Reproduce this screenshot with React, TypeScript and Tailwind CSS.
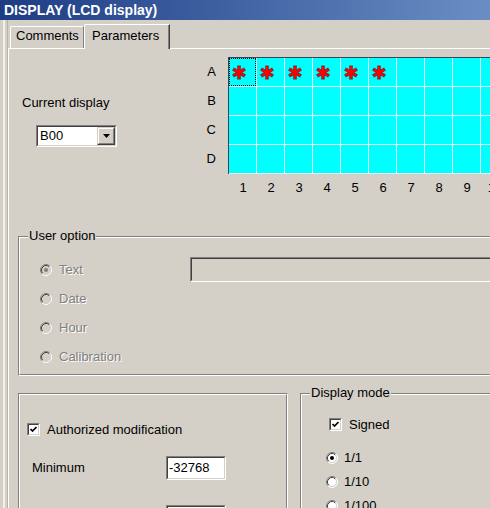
import React from "react"

const cols = Array.from({ length: 11 }, (_, i) => i + 1)
const rows = ["A", "B", "C", "D"]

const Star = () => (
  <svg width="14" height="15" viewBox="0 0 14 15">
    <g stroke="#6a3030" strokeWidth="3.6">
      <line x1="7" y1="0.5" x2="7" y2="14.5" />
      <line x1="1" y1="4" x2="13" y2="11" />
      <line x1="1" y1="11" x2="13" y2="4" />
    </g>
    <g stroke="#ff0000" strokeWidth="2.2">
      <line x1="7" y1="1.3" x2="7" y2="13.7" />
      <line x1="1.7" y1="4.4" x2="12.3" y2="10.6" />
      <line x1="1.7" y1="10.6" x2="12.3" y2="4.4" />
    </g>
  </svg>
)

const Radio = ({
  checked,
  disabled,
}: {
  checked?: boolean
  disabled?: boolean
}) => (
  <svg width="12" height="12" viewBox="0 0 12 12" className="shrink-0">
    <circle cx="6" cy="6" r="5" fill={disabled ? "#d4d0c8" : "#ffffff"} />
    <path d="M2.11 9.89 A5.5 5.5 0 0 1 9.89 2.11" stroke="#808080" fill="none" />
    <path d="M9.89 2.11 A5.5 5.5 0 0 1 2.11 9.89" stroke="#ffffff" fill="none" />
    <path d="M2.82 9.18 A4.5 4.5 0 0 1 9.18 2.82" stroke="#404040" fill="none" />
    <path d="M9.18 2.82 A4.5 4.5 0 0 1 2.82 9.18" stroke="#d4d0c8" fill="none" />
    {checked && (
      <circle cx="6" cy="6" r="2" fill={disabled ? "#808080" : "#000000"} />
    )}
  </svg>
)

const Check = () => (
  <div className="w-[13px] h-[13px] shrink-0 border border-t-[#808080] border-l-[#808080] border-r-white border-b-white">
    <div className="w-full h-full border border-t-[#404040] border-l-[#404040] border-r-[#d4d0c8] border-b-[#d4d0c8] bg-white">
      <svg width="9" height="9" viewBox="0 0 9 9">
        <polyline
          points="1.5,4 3.5,6 7.5,2"
          fill="none"
          stroke="#000"
          strokeWidth="1.7"
        />
      </svg>
    </div>
  </div>
)

const Sunken = ({
  className,
  inner,
  children,
}: {
  className?: string
  inner?: string
  children?: React.ReactNode
}) => (
  <div
    className={
      "border border-t-[#808080] border-l-[#808080] border-r-white border-b-white " +
      (className || "")
    }
  >
    <div
      className={
        "w-full h-full border border-t-[#404040] border-l-[#404040] border-r-[#d4d0c8] border-b-[#d4d0c8] " +
        (inner || "")
      }
    >
      {children}
    </div>
  </div>
)

const Group = ({
  label,
  className,
  children,
}: {
  label?: string
  className?: string
  children?: React.ReactNode
}) => (
  <div
    className={
      "relative shrink-0 border border-t-[#808080] border-l-[#808080] border-r-white border-b-white " +
      (className || "")
    }
  >
    <div className="w-full h-full border border-t-white border-l-white border-r-[#808080] border-b-[#808080]">
      {children}
    </div>
    {label && (
      <div className="absolute left-[9px] -top-[9px] px-[1px] bg-[#d4d0c8] leading-[15px]">
        {label}
      </div>
    )}
  </div>
)

const Disabled = ({ children }: { children: React.ReactNode }) => (
  <span className="text-[#808080] [text-shadow:1px_1px_0_#ffffff]">
    {children}
  </span>
)

export default function App() {
  return (
    <div className="w-[490px] h-[508px] overflow-hidden bg-[#d4d0c8] font-['Liberation_Sans',Arial,sans-serif] text-[13px] text-black">
      <div className="h-[20px] bg-gradient-to-r from-[#1e3c84] to-[#6a8ec4] text-white font-bold text-[14px] leading-[20px] pl-[4px] whitespace-nowrap">
        DISPLAY (LCD display)
      </div>

      <div className="flex">
        <div className="w-[8px] shrink-0 flex">
          <div className="w-[3px]" />
          <div className="w-[2px] bg-[#f2f2e4]" />
          <div className="w-[2px]" />
          <div className="w-[1px] bg-[#b8b4ac]" />
        </div>

        <div className="w-[720px] shrink-0">
          <div className="h-[28px] flex items-end pl-[2px] whitespace-nowrap">
            <div className="w-[74px] h-[22px] shrink-0 border-t border-l border-white border-r border-r-[#808080] rounded-tl-[2px] pl-[5px] leading-[18px]">
              Comments
            </div>
            <div className="relative z-10 -mb-[1px] w-[86px] h-[25px] shrink-0 bg-[#d4d0c8] border-t border-l border-white border-r border-r-[#404040] shadow-[inset_-1px_0_0_#808080] rounded-tl-[2px] pl-[7px] leading-[22px]">
              Parameters
            </div>
          </div>

          <div className="border-t border-l border-white">
            <div className="flex h-[187px]">
              <div className="w-[194px] shrink-0 pl-[13px] pt-[46px]">
                <div className="leading-[15px]">Current display</div>
                <Sunken
                  className="mt-[15px] ml-[14px] w-[81px] h-[22px]"
                  inner="bg-white flex items-center"
                >
                  <span className="pl-[2px] flex-1 leading-[18px]">B00</span>
                  <div className="w-[18px] h-[18px] border border-t-[#d4d0c8] border-l-[#d4d0c8] border-r-[#404040] border-b-[#404040]">
                    <div className="w-full h-full bg-[#d4d0c8] border border-t-white border-l-white border-r-[#808080] border-b-[#808080] flex items-center justify-center">
                      <svg width="7" height="4" viewBox="0 0 7 4">
                        <polygon points="0,0 7,0 3.5,4" fill="#000" />
                      </svg>
                    </div>
                  </div>
                </Sunken>
              </div>

              <div className="w-[25px] shrink-0 pt-[9px]">
                {rows.map((r) => (
                  <div
                    key={r}
                    className="h-[29px] flex items-center justify-end pr-[12px] pb-[2px]"
                  >
                    {r}
                  </div>
                ))}
              </div>

              <div className="pt-[8px] shrink-0">
                <div className="border-l border-t border-[#3a4450] w-fit">
                  {rows.map((r, ri) => (
                    <div key={r} className="flex">
                      {cols.map((c) => (
                        <div
                          key={c}
                          className="relative w-[28px] h-[29px] shrink-0 bg-[#00ffff] border-r border-b border-[#e6ffff] flex items-center pl-[3px]"
                        >
                          {ri === 0 && c <= 6 && <Star />}
                          {ri === 0 && c === 1 && (
                            <div className="absolute inset-0 border border-dotted border-black" />
                          )}
                        </div>
                      ))}
                    </div>
                  ))}
                </div>
                <div className="flex mt-[6px] ml-[1px]">
                  {cols.map((c) => (
                    <div
                      key={c}
                      className="w-[28px] shrink-0 text-center leading-[15px]"
                    >
                      {c}
                    </div>
                  ))}
                </div>
              </div>
            </div>

            <Group label="User option" className="ml-[9px] w-[600px] h-[140px]">
              <div className="flex">
                <div className="w-[170px] shrink-0 pl-[20px] pt-[17px]">
                  {[
                    ["Text", true],
                    ["Date", false],
                    ["Hour", false],
                    ["Calibration", false],
                  ].map(([label, on]) => (
                    <div
                      key={label as string}
                      className="h-[29px] flex items-center gap-[7px]"
                    >
                      <Radio checked={on as boolean} disabled />
                      <Disabled>{label as string}</Disabled>
                    </div>
                  ))}
                </div>
                <Sunken
                  className="mt-[19px] h-[25px] flex-1"
                  inner="bg-[#d4d0c8]"
                />
              </div>
            </Group>

            <div className="flex mt-[17px]">
              <Group className="ml-[9px] w-[270px] h-[150px]">
                <div className="pt-[27px]">
                  <div className="pl-[7px] h-[15px] flex items-center gap-[7px]">
                    <Check />
                    <span>Authorized modification</span>
                  </div>
                  <div className="mt-[19px] pl-[12px] h-[24px] flex items-center">
                    <span className="w-[134px] shrink-0">Minimum</span>
                    <Sunken
                      className="w-[60px] h-[24px] shrink-0"
                      inner="bg-white flex items-center pl-[1px]"
                    >
                      -32768
                    </Sunken>
                  </div>
                  <div className="mt-[25px] pl-[12px] flex">
                    <div className="w-[134px] shrink-0" />
                    <Sunken className="w-[60px] h-[24px] shrink-0" inner="bg-white" />
                  </div>
                </div>
              </Group>

              <Group label="Display mode" className="ml-[12px] w-[300px] h-[150px]">
                <div className="pt-[22px]">
                  <div className="pl-[27px] h-[15px] flex items-center gap-[7px]">
                    <Check />
                    <span>Signed</span>
                  </div>
                  <div className="mt-[14px] pl-[24px]">
                    {[
                      ["1/1", true],
                      ["1/10", false],
                      ["1/100", false],
                    ].map(([label, on]) => (
                      <div
                        key={label as string}
                        className="h-[24px] flex items-center gap-[6px]"
                      >
                        <Radio checked={on as boolean} />
                        <span>{label as string}</span>
                      </div>
                    ))}
                  </div>
                </div>
              </Group>
            </div>
          </div>
        </div>
      </div>
    </div>
  )
}
